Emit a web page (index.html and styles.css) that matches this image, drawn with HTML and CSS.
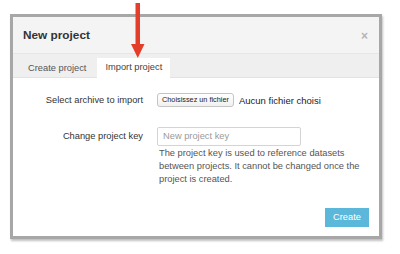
FILE: index.html
```html
<!DOCTYPE html>
<html>
<head>
<meta charset="utf-8">
<link rel="stylesheet" href="styles.css">
</head>
<body>
<div class="stage">
  <div class="modal">
    <div class="modal-header">
      <h3 class="title">New project</h3>
      <span class="close">×</span>
    </div>
    <div class="tabs">
      <div class="tab">Create project</div>
      <div class="tab active">Import project</div>
    </div>
    <div class="modal-body">
      <div class="row row-file">
        <label class="label">Select archive to import</label>
        <div class="control file-control">
          <span class="file-btn">Choisissez un fichier</span>
          <span class="file-name">Aucun fichier choisi</span>
        </div>
      </div>
      <div class="row row-key">
        <label class="label label-key">Change project key</label>
        <div class="control">
          <div class="input">New project key</div>
          <p class="help">The project key is used to reference datasets between projects. It cannot be changed once the project is created.</p>
        </div>
      </div>
    </div>
    <div class="modal-footer">
      <span class="btn-create">Create</span>
    </div>
  </div>
  <svg class="arrow" width="16" height="60" viewBox="0 0 16 60">
    <rect x="5.5" y="3" width="4.5" height="43" fill="#e43e2b"/>
    <polygon points="1,44 14.5,44 7.8,58" fill="#e43e2b"/>
  </svg>
</div>
</body>
</html>
```

FILE: styles.css
```css
html, body {
  margin: 0;
  padding: 0;
  background: #ffffff;
}
body {
  font-family: "Liberation Sans", Arial, sans-serif;
  font-size: 9.3px;
  color: #333333;
}
.stage {
  position: relative;
  width: 400px;
  height: 254px;
  padding: 14px 0 0 10px;
  box-sizing: border-box;
}
.modal {
  width: 372px;
  height: 225px;
  box-sizing: border-box;
  border: 3px solid #a7a7a7;
  box-shadow: 1px 2px 2px rgba(0, 0, 0, 0.25);
  background: #ffffff;
  display: flex;
  flex-direction: column;
}
.modal-header {
  height: 36px;
  background: #f4f4f4;
  border-bottom: 1px solid #e6e6e6;
  display: flex;
  align-items: center;
  justify-content: space-between;
  padding: 0 11px 0 10px;
}
.title {
  margin: 0;
  font-size: 11.8px;
  font-weight: bold;
  color: #333333;
}
.close {
  font-size: 12px;
  font-weight: bold;
  color: #b5b5b5;
  line-height: 1;
  margin-top: 2px;
}
.tabs {
  height: 23px;
  background: #efefef;
  border-bottom: 1px solid #e2e2e2;
  display: flex;
  align-items: flex-end;
  padding-left: 7px;
}
.tab {
  height: 19px;
  line-height: 19px;
  padding: 0 8px;
  margin-right: 3px;
  margin-bottom: -1px;
  color: #555555;
}
.tab.active {
  background: #ffffff;
  color: #444444;
  height: 20px;
}
.modal-body {
  padding-top: 15px;
}
.row {
  display: flex;
}
.label {
  width: 130px;
  text-align: right;
  padding-right: 14px;
  color: #333333;
}
.row-file {
  align-items: center;
  height: 14px;
}
.file-control {
  display: flex;
  align-items: center;
}
.file-btn {
  height: 14px;
  box-sizing: border-box;
  border: 1px solid #c4c4c4;
  border-radius: 3px;
  background: linear-gradient(#ffffff, #f1f1f1);
  font-size: 7.3px;
  line-height: 12px;
  padding: 0 4px;
  color: #222222;
}
.file-name {
  margin-left: 5px;
  font-size: 9.5px;
  color: #222222;
}
.row-key {
  margin-top: 20px;
}
.label-key {
  line-height: 19px;
}
.input {
  width: 144px;
  height: 19px;
  box-sizing: border-box;
  border: 1px solid #d4d4d4;
  border-radius: 2px;
  padding-left: 5px;
  line-height: 17px;
  color: #9a9a9a;
}
.help {
  margin: 1px 0 0 2px;
  width: 202px;
  line-height: 13px;
  color: #555555;
}
.modal-footer {
  margin-top: auto;
  display: flex;
  justify-content: flex-end;
  padding: 0 10px 9px 0;
}
.btn-create {
  width: 44px;
  height: 19px;
  line-height: 19px;
  text-align: center;
  background: #5bb8da;
  color: #ffffff;
}
.arrow {
  position: absolute;
  left: 130px;
  top: 0;
}
```
